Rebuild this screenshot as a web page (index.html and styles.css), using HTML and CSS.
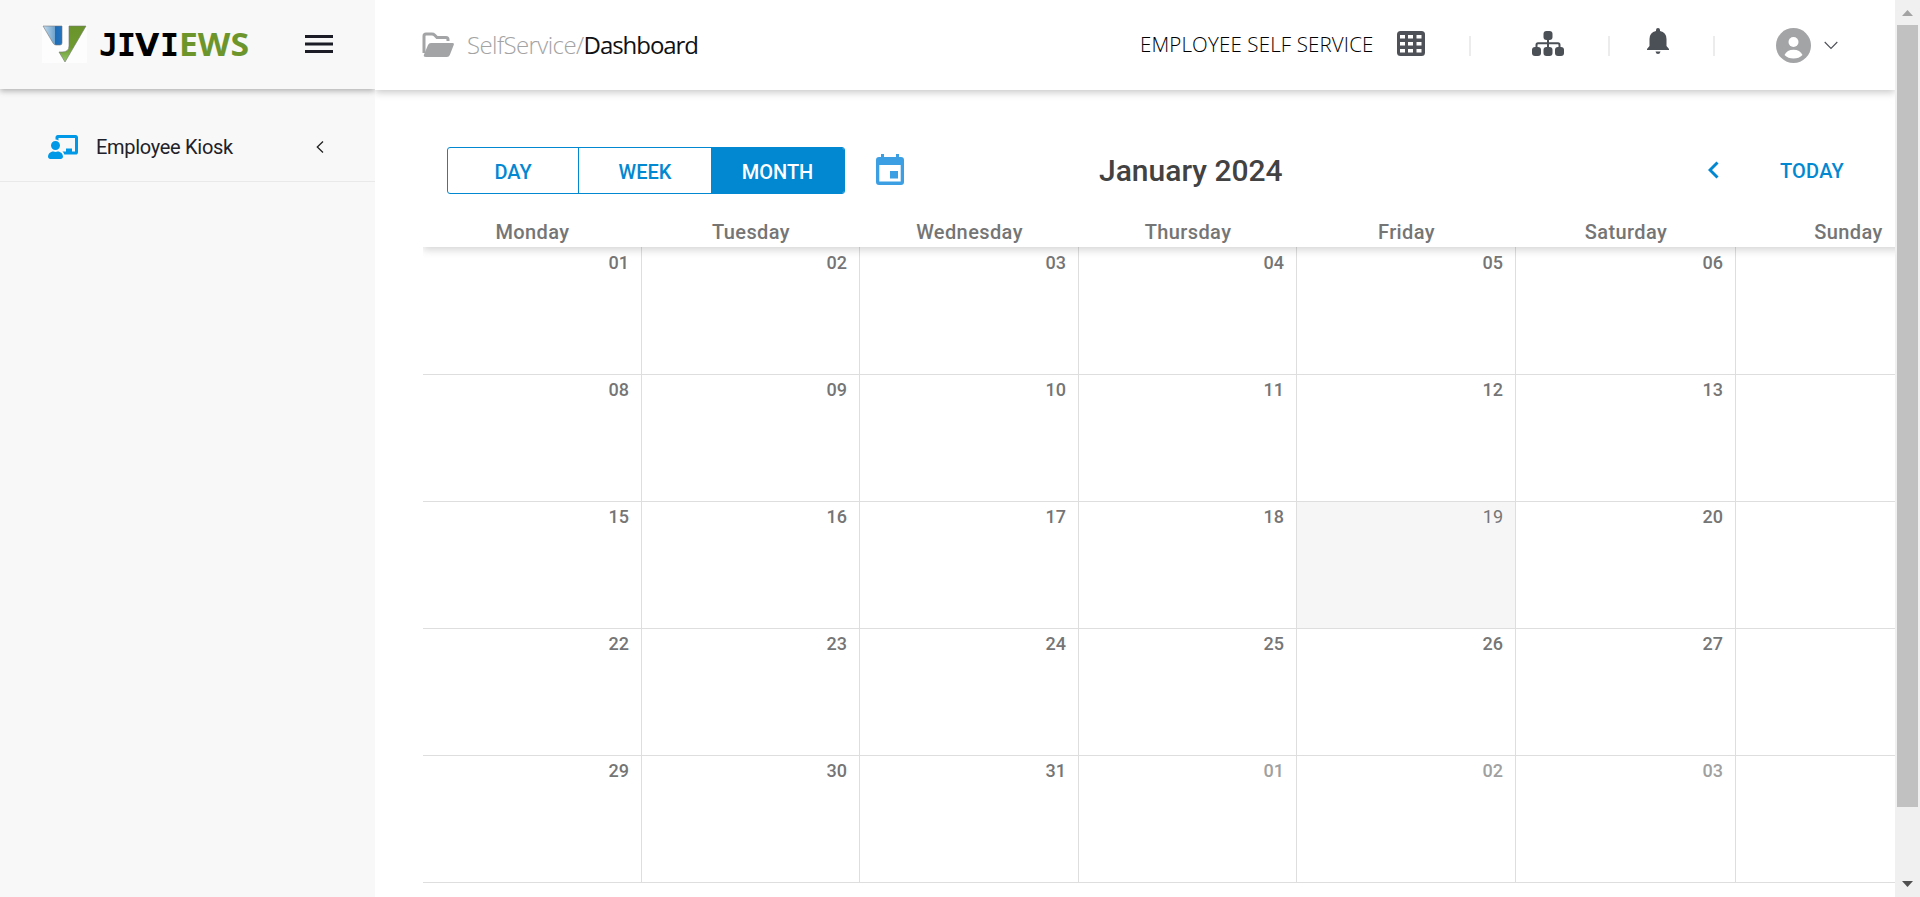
FILE: index.html
```html
<!DOCTYPE html>
<html lang="en">
<head>
<meta charset="utf-8">
<title>Dashboard</title>
<link rel="stylesheet" href="styles.css">
</head>
<body>
<div class="app">
  <aside class="sidebar">
    <div class="brand">
      <svg class="logo" width="220" height="50" viewBox="0 0 220 50">
        <defs>
          <linearGradient id="blue" x1="0" x2="1"><stop offset="0" stop-color="#c4dced"/><stop offset=".62" stop-color="#6fa3cd"/><stop offset=".64" stop-color="#1c6cb8"/><stop offset="1" stop-color="#2474c0"/></linearGradient>
          <linearGradient id="green" x1="0" x2="0" y1="0" y2="1"><stop offset="0" stop-color="#6a942b"/><stop offset=".6" stop-color="#6e9a30"/><stop offset="1" stop-color="#94c968"/></linearGradient>
        </defs>
        <rect width="45" height="38" fill="#fdfdfd"/>
        <path d="M1 1H20V18Q20 20 18 20H14Q12 20 11 18Z" fill="url(#blue)" stroke="#777" stroke-width=".6"/>
        <path d="M27 1H44L23 37L17 27H20Q27 27 27 21Z" fill="url(#green)" stroke="#777" stroke-width=".6"/>
        <text class="logo-dark" y="30.500"><tspan x="57">J</tspan><tspan x="75">I</tspan><tspan class="logo-wide" x="93">V</tspan><tspan x="118">I</tspan></text>
        <text class="logo-green" x="137" y="30.500" textLength="70" lengthAdjust="spacingAndGlyphs">EWS</text>
      </svg>
      <svg class="burger" width="28" height="20" viewBox="0 0 28 20"><path d="M0 1.500H28M0 9H28M0 16.500H28" stroke="#1b1c25" stroke-width="3"/></svg>
    </div>
    <nav class="nav">
      <a class="nav-item">
        <svg width="30" height="24" viewBox="0 0 640 512"><path fill="#0099e8" d="M208 352c-2.4 0-4.800.4-7 1.100C188 357.300 174.400 360 160 360s-28-2.700-41-6.900c-2.300-.7-4.700-1.100-7.100-1.100C49.900 352-.3 402.500 0 464.600.1 490.900 21.700 512 48 512h224c26.300 0 47.900-21.100 48-47.400.3-62.100-49.900-112.600-112-112.600zm-48-32c53 0 96-43 96-96s-43-96-96-96-96 43-96 96 43 96 96 96zM592 0H208c-26.500 0-48 22.200-48 49.600V98c23.400 0 45.100 6.800 64 17.800V64h352v288h-64v-64H384v64h-76.300c19.100 16.700 33.100 38.700 39.700 64H592c26.500 0 48-22.200 48-49.600V49.600C640 22.200 618.500 0 592 0z"/></svg>
        <span class="nav-label">Employee Kiosk</span>
        <svg width="8" height="12" viewBox="0 0 8 12"><path d="M7 .5L1.300 6L7 11.500" fill="none" stroke="#222" stroke-width="1.300"/></svg>
      </a>
    </nav>
  </aside>
  <main class="main">
    <header class="topbar">
      <svg class="folder" width="33" height="26" viewBox="0 0 33 26"><path d="M2 21V4Q2 2 4 2H10Q11.500 2 12.500 3L15 5.500H24Q26 5.500 26 7.500V9" fill="none" stroke="#a3a4a6" stroke-width="3"/><path d="M9 11H30.500Q32.500 11 31.700 13L27.800 23Q27 25 25 25H4Q1 25 2 22.500L6 13Q6.800 11 9 11Z" fill="#a3a4a6"/></svg>
      <div class="crumbs"><span class="crumb-root">SelfService/</span><span>Dashboard</span></div>
      <span class="module">EMPLOYEE SELF SERVICE</span>
      <svg class="grid-icon" width="28" height="25" viewBox="0 0 28 25"><rect width="28" height="25" rx="3.500" fill="#4e5157"/><path d="M3 4h5v3.500H3zM11 4h5v3.500h-5zM19.500 4h5v3.500h-5zM3 11h5v3.500H3zM11 11h5v3.500h-5zM19.500 11h5v3.500h-5zM3 18h5v3.500H3zM11 18h5v3.500h-5zM19.500 18h5v3.500h-5z" fill="#fff"/></svg>
      <i class="sep sep-a"></i>
      <svg class="tree-icon" width="32" height="25" viewBox="0 0 32 25"><g fill="#4b4f56"><rect x="11.500" width="9" height="9" rx="3"/><rect y="16" width="9" height="9" rx="3"/><rect x="11.500" y="16" width="9" height="9" rx="3"/><rect x="23" y="16" width="9" height="9" rx="3"/></g><path d="M16 8V17M4.500 17V14Q4.500 12.300 6 12.300H26Q27.500 12.300 27.500 14V17" fill="none" stroke="#4b4f56" stroke-width="2"/></svg>
      <i class="sep sep-b"></i>
      <svg class="bell" width="22" height="26" viewBox="0 0 22 26"><path d="M11 0Q13 0 13 2V3Q19.500 4.500 19.500 11V18L22 21V22H0V21L2.500 18V11Q2.500 4.500 9 3V2Q9 0 11 0ZM8.500 23.500H13.500Q13 26 11 26Q9 26 8.500 23.500Z" fill="#4b4f56"/></svg>
      <i class="sep sep-c"></i>
      <svg class="avatar" width="35" height="35" viewBox="0 0 35 35"><circle cx="17.500" cy="17.500" r="17.500" fill="#a3a4a6"/><circle cx="17.500" cy="14" r="5" fill="#fff"/><path d="M8.500 27Q11 21.700 17.500 21.700T26.500 27Q23 30.500 17.500 30.500T8.500 27Z" fill="#fff"/></svg>
      <svg class="caret" width="14" height="9" viewBox="0 0 14 9"><path d="M.7 1L7 7.500L13.300 1" fill="none" stroke="#4b4f56" stroke-width="1.100"/></svg>
    </header>
    <section class="calendar">
      <div class="toolbar">
        <div class="views"><button class="view day">DAY</button><button class="view week">WEEK</button><button class="view month">MONTH</button></div>
        <svg class="cal-icon" width="28" height="31" viewBox="0 0 28 31"><path d="M5 0H8V3H20V0H23V3H25Q28 3 28 6V28Q28 31 25 31H3Q0 31 0 28V6Q0 3 3 3H5ZM3.300 11V27.500H24.700V11Z" fill="#3c9fe4" fill-rule="evenodd"/><rect x="14" y="17" width="8" height="7.500" fill="#3c9fe4"/></svg>
        <h1 class="title">January 2024</h1>
        <svg class="prev" width="11" height="18" viewBox="0 0 11 18"><path d="M9.500 1.500L2 9L9.500 16.500" fill="none" stroke="#0288d1" stroke-width="3"/></svg>
        <button class="today">TODAY</button>
      </div>
      <div class="weekdays"><span>Monday</span><span>Tuesday</span><span>Wednesday</span><span>Thursday</span><span>Friday</span><span>Saturday</span><span>Sunday</span></div>
      <div class="days">
        <div>01</div><div>02</div><div>03</div><div>04</div><div>05</div><div>06</div><div></div>
        <div>08</div><div>09</div><div>10</div><div>11</div><div>12</div><div>13</div><div></div>
        <div>15</div><div>16</div><div>17</div><div>18</div><div class="current">19</div><div>20</div><div></div>
        <div>22</div><div>23</div><div>24</div><div>25</div><div>26</div><div>27</div><div></div>
        <div>29</div><div>30</div><div>31</div><div class="other">01</div><div class="other">02</div><div class="other">03</div><div></div>
      </div>
    </section>
  </main>
  <div class="scrollbar">
    <svg class="up" width="11" height="6" viewBox="0 0 11 6"><path d="M0 6L5.500 0L11 6Z" fill="#a3a3a3"/></svg>
    <div class="thumb"></div>
    <svg class="down" width="11" height="6" viewBox="0 0 11 6"><path d="M0 0H11L5.500 6Z" fill="#505050"/></svg>
  </div>
</div>
</body>
</html>
```
FILE: styles.css
```css
* { box-sizing: border-box; }
body { margin: 0; font-family: Roboto, sans-serif; background: #fff; overflow: hidden; }
svg { display: block; flex: none; }
button { font: inherit; border: 0; background: none; padding: 0; }
.app { display: grid; grid-template-columns: 375px 1520px 25px; height: 897px; }

.sidebar { background: #f8f8f8; }
.brand { height: 89px; display: flex; align-items: flex-start; padding: 25px 0 0 42px; box-shadow: 0 2px 6px rgba(0,0,0,.3); clip-path: inset(0 0 -12px 0); }
.logo { overflow: visible; }
.logo-dark { font: bold 31.500px "DejaVu Sans Mono", monospace; fill: #000; }
.logo-wide { font-family: "DejaVu Sans", sans-serif; }
.logo-green { font: bold 32px "Open Sans", sans-serif; fill: #6c962c; }
.burger { margin: 10px 0 0 43px; }
.nav { padding-top: 22px; }
.nav-item { height: 71px; display: flex; align-items: center; padding: 2px 51px 0 48px; border-bottom: 1px solid #e9e9e9; }
.nav-label { flex: 1; padding-left: 18px; font-size: 20px; letter-spacing: -.3px; color: #212129; }

.main { min-width: 0; overflow: hidden; }
.topbar { height: 90px; display: flex; align-items: flex-start; box-shadow: 0 2px 8px rgba(0,0,0,.24); }
.folder { margin: 32px 0 0 47px; }
.crumbs { width: 232px; margin: 28px 0 0 12px; font: 300 24px/34px "Open Sans", sans-serif; letter-spacing: -.6px; color: #111; white-space: nowrap; }
.crumbs span:last-child { font-weight: 400; letter-spacing: -1.05px; }
.crumbs .crumb-root { color: #a3a3a3; }
.module { width: 234px; margin: 28px 0 0 441px; font: 300 20.500px/32px "Open Sans", sans-serif; letter-spacing: .15px; color: #000; white-space: nowrap; }
.grid-icon { margin: 31px 0 0 23px; }
.sep { width: 2px; height: 20px; margin-top: 36px; background: #ececec; flex: none; }
.sep-a { margin-left: 44px; }
.tree-icon { margin: 31px 0 0 61px; }
.sep-b { margin-left: 44px; }
.bell { margin: 28px 0 0 37px; }
.sep-c { margin-left: 44px; }
.avatar { margin: 28px 0 0 61px; }
.caret { margin: 41px 0 0 13px; }

.calendar { padding: 57px 0 0 48px; }
.toolbar { height: 67px; display: flex; align-items: flex-start; }
.views { display: flex; width: 398px; height: 47px; margin-left: 24px; border: 1px solid #0288d1; border-radius: 3px; overflow: hidden; }
.view { color: #0288d1; font-size: 20px; font-weight: 500; padding-top: 2px; }
.day { width: 131px; border-right: 1px solid #0288d1; }
.week { width: 132px; }
.month { flex: 1; background: #0288d1; color: #fff; }
.cal-icon { margin: 7px 0 0 31px; }
.title { width: 186px; margin: 6px 0 0 195px; font-size: 30px; line-height: 36px; font-weight: 500; color: #424242; white-space: nowrap; }
.prev { margin: 14px 0 0 423px; }
.today { margin: 10px 0 0 61px; color: #0288d1; font-size: 20px; line-height: 28px; font-weight: 500; letter-spacing: .2px; }
.weekdays, .days { display: grid; grid-template-columns: 219px 218px 219px 218px 219px 220px 225px; }
.weekdays { width: 1538px; height: 33px; position: relative; background: #fff; box-shadow: 0 3px 8px rgba(0,0,0,.17); clip-path: inset(0 0 -14px 0); text-align: center; font-size: 20px; line-height: 36px; font-weight: 500; letter-spacing: .4px; color: #757575; }
.days { grid-template-rows: 128px repeat(4, 127px); font-size: 18px; line-height: 22px; font-weight: 500; letter-spacing: 0; color: #757575; }
.days div { border-right: 1px solid #dedede; border-bottom: 1px solid #dedede; padding: 4px 12px 0 0; text-align: right; }
.days div:nth-child(-n+7) { padding-top: 5px; }
.days .current { background: #f6f6f6; font-weight: 400; }
.days .other { color: #a0a0a0; }

.scrollbar { background: #f0f0f0; display: flex; flex-direction: column; padding-left: 2px; }
.up { margin: 10px 0 9px 5px; }
.thumb { width: 21px; height: 782px; background: #c1c1c1; }
.down { margin: 74px 0 0 5px; }
```
